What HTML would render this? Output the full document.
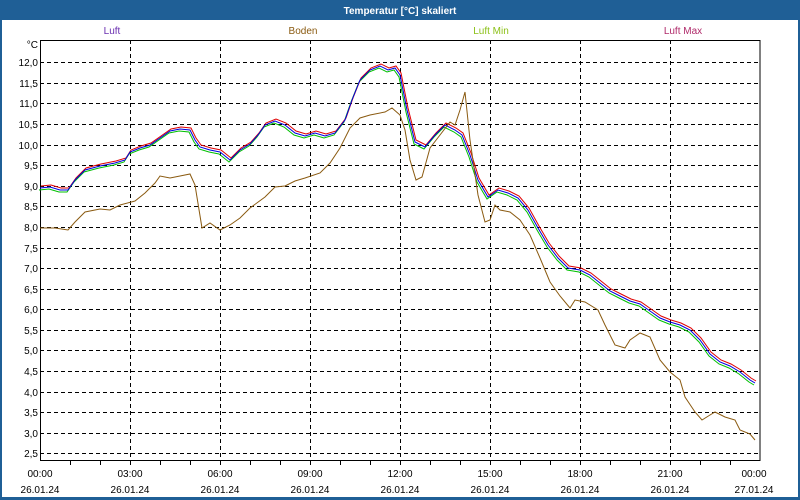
<!DOCTYPE html>
<html><head><meta charset="utf-8"><style>
html,body{margin:0;padding:0;width:800px;height:500px;overflow:hidden;background:#fff}
svg{display:block}
text{font-family:"Liberation Sans","DejaVu Sans",sans-serif;font-size:10px}
</style></head><body>
<svg width="800" height="500" xmlns="http://www.w3.org/2000/svg">
<rect x="0" y="0" width="800" height="500" fill="#1f5f96"/>
<rect x="2" y="20" width="796" height="477" fill="#fff"/>
<text x="400" y="14" text-anchor="middle" fill="#fff" font-weight="bold" style="font-size:10px">Temperatur [°C] skaliert</text>
<text x="112" y="34" text-anchor="middle" fill="#6a2fb0">Luft</text>
<text x="303" y="34" text-anchor="middle" fill="#8a5a10">Boden</text>
<text x="491" y="34" text-anchor="middle" fill="#8cc018">Luft Min</text>
<text x="683" y="34" text-anchor="middle" fill="#b02a6a">Luft Max</text>
<g stroke="#000" stroke-width="1" stroke-dasharray="4,3" fill="none">
<path d="M40 62.5H760M40 83.5H760M40 103.5H760M40 124.5H760M40 145.5H760M40 165.5H760M40 186.5H760M40 206.5H760M40 227.5H760M40 248.5H760M40 268.5H760M40 289.5H760M40 309.5H760M40 330.5H760M40 350.5H760M40 371.5H760M40 392.5H760M40 412.5H760M40 433.5H760M40 453.5H760"/>
<path d="M130.5 40V460M220.5 40V460M310.5 40V460M400.5 40V460M490.5 40V460M580.5 40V460M670.5 40V460"/>
</g>
<rect x="40.5" y="40.5" width="719.5" height="420" fill="none" stroke="#000"/>
<path stroke="#000" d="M70.5 460v5M100.5 460v5M130.5 460v5M160.5 460v5M190.5 460v5M220.5 460v5M250.5 460v5M280.5 460v5M310.5 460v5M340.5 460v5M370.5 460v5M400.5 460v5M430.5 460v5M460.5 460v5M490.5 460v5M520.5 460v5M550.5 460v5M580.5 460v5M610.5 460v5M640.5 460v5M670.5 460v5M700.5 460v5M730.5 460v5"/>
<g fill="#000" text-anchor="end">
<text x="38" y="48">°C</text>
<text x="38" y="66">12,0</text><text x="38" y="87">11,5</text><text x="38" y="107">11,0</text><text x="38" y="128">10,5</text><text x="38" y="149">10,0</text><text x="38" y="169">9,5</text><text x="38" y="190">9,0</text><text x="38" y="210">8,5</text><text x="38" y="231">8,0</text><text x="38" y="252">7,5</text><text x="38" y="272">7,0</text><text x="38" y="293">6,5</text><text x="38" y="313">6,0</text><text x="38" y="334">5,5</text><text x="38" y="354">5,0</text><text x="38" y="375">4,5</text><text x="38" y="396">4,0</text><text x="38" y="416">3,5</text><text x="38" y="437">3,0</text><text x="38" y="457">2,5</text>
</g>
<g fill="#000" text-anchor="middle">
<text x="40" y="477">00:00</text><text x="40" y="493">26.01.24</text>
<text x="130" y="477">03:00</text><text x="130" y="493">26.01.24</text>
<text x="220" y="477">06:00</text><text x="220" y="493">26.01.24</text>
<text x="310" y="477">09:00</text><text x="310" y="493">26.01.24</text>
<text x="400" y="477">12:00</text><text x="400" y="493">26.01.24</text>
<text x="490" y="477">15:00</text><text x="490" y="493">26.01.24</text>
<text x="580" y="477">18:00</text><text x="580" y="493">26.01.24</text>
<text x="670" y="477">21:00</text><text x="670" y="493">26.01.24</text>
<text x="754" y="477">00:00</text><text x="754" y="493">27.01.24</text>
</g>
<defs><path id="L" d="M40 188L50 187L60 190L68 190L75 180L85 170L100 166L115 163L125 160L130 152L140 148L150 145L160 138L170 131L180 129L190 130L195 140L200 147L210 150L220 152L230 160L240 150L250 144L258 135L265 125L275 121L285 125L295 133L305 136L315 133L325 136L335 133L345 120L352 100L360 80L370 70L380 66L388 70L395 68L400 75L407 110L415 142L425 147L435 135L445 125L455 130L462 135L470 155L478 180L488 197L498 190L508 193L518 198L528 210L538 228L548 245L558 258L568 268L580 270L590 275L600 283L610 291L620 296L630 301L640 304L650 311L660 318L670 322L680 325L690 330L700 340L710 354L720 362L730 366L740 372L750 380L755 383"/></defs>
<g fill="none" stroke-width="1">
<use href="#L" stroke="#00c000" transform="translate(-1,2)"/>
<use href="#L" stroke="#e00000" transform="translate(1,-2)"/>
<use href="#L" stroke="#0000e0"/>
<path stroke="#8a5a10" stroke-width="1" d="M40 228L55 228L68 230L75 222L85 212L100 209L110 210L120 205L135 201L145 193L155 183L160 176L170 178L180 176L190 174L195 185L202 228L210 223L220 230L230 225L240 218L250 208L265 197L275 187L285 186L295 181L305 178L320 173L330 163L340 148L350 128L360 118L370 115L385 112L392 108L400 115L405 130L410 160L416 180L422 177L430 148L440 135L450 122L455 125L460 110L465 92L470 140L478 195L485 222L490 220L495 205L500 210L510 212L520 220L530 235L540 258L550 282L560 296L570 308L575 300L585 302L598 310L605 325L615 345L625 348L630 340L640 333L650 337L660 360L670 372L680 380L685 397L695 412L702 420L710 415L715 412L725 417L735 420L740 430L750 434L755 440"/>
</g>
</svg>
</body></html>
